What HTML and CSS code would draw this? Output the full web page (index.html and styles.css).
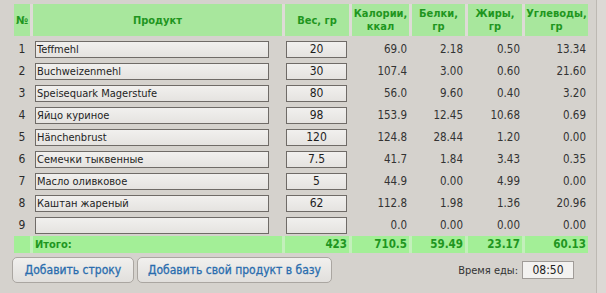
FILE: index.html
```html
<!DOCTYPE html>
<html lang="ru">
<head>
<meta charset="utf-8">
<title>Калькулятор</title>
<link rel="stylesheet" href="styles.css">
</head>
<body>
<div class="page">
  <div class="row head">
    <div class="hc">№</div>
    <div class="hc">Продукт</div>
    <div class="hc">Вес, гр</div>
    <div class="hc">Калории,<br>ккал</div>
    <div class="hc">Белки,<br>гр</div>
    <div class="hc">Жиры, гр</div>
    <div class="hc">Углеводы,<br>гр</div>
  </div>

  <div class="body">
    <div class="row item"><div class="n">1</div><div class="c"><div class="inp name">Teffmehl</div></div><div class="c"><div class="inp w">20</div></div><div class="v">69.0</div><div class="v">2.18</div><div class="v">0.50</div><div class="v">13.34</div></div>
    <div class="row item"><div class="n">2</div><div class="c"><div class="inp name">Buchweizenmehl</div></div><div class="c"><div class="inp w">30</div></div><div class="v">107.4</div><div class="v">3.00</div><div class="v">0.60</div><div class="v">21.60</div></div>
    <div class="row item"><div class="n">3</div><div class="c"><div class="inp name">Speisequark Magerstufe</div></div><div class="c"><div class="inp w">80</div></div><div class="v">56.0</div><div class="v">9.60</div><div class="v">0.40</div><div class="v">3.20</div></div>
    <div class="row item"><div class="n">4</div><div class="c"><div class="inp name">Яйцо куриное</div></div><div class="c"><div class="inp w">98</div></div><div class="v">153.9</div><div class="v">12.45</div><div class="v">10.68</div><div class="v">0.69</div></div>
    <div class="row item"><div class="n">5</div><div class="c"><div class="inp name">Hänchenbrust</div></div><div class="c"><div class="inp w">120</div></div><div class="v">124.8</div><div class="v">28.44</div><div class="v">1.20</div><div class="v">0.00</div></div>
    <div class="row item"><div class="n">6</div><div class="c"><div class="inp name">Семечки тыквенные</div></div><div class="c"><div class="inp w">7.5</div></div><div class="v">41.7</div><div class="v">1.84</div><div class="v">3.43</div><div class="v">0.35</div></div>
    <div class="row item"><div class="n">7</div><div class="c"><div class="inp name">Масло оливковое</div></div><div class="c"><div class="inp w">5</div></div><div class="v">44.9</div><div class="v">0.00</div><div class="v">4.99</div><div class="v">0.00</div></div>
    <div class="row item"><div class="n">8</div><div class="c"><div class="inp name">Каштан жареный</div></div><div class="c"><div class="inp w">62</div></div><div class="v">112.8</div><div class="v">1.98</div><div class="v">1.36</div><div class="v">20.96</div></div>
    <div class="row item"><div class="n">9</div><div class="c"><div class="inp name"></div></div><div class="c"><div class="inp w"></div></div><div class="v">0.0</div><div class="v">0.00</div><div class="v">0.00</div><div class="v">0.00</div></div>
  </div>

  <div class="row total">
    <div class="tc"></div>
    <div class="tc label">Итого:</div>
    <div class="tc num">423</div>
    <div class="tc num">710.5</div>
    <div class="tc num">59.49</div>
    <div class="tc num">23.17</div>
    <div class="tc num">60.13</div>
  </div>

  <div class="footer">
    <button class="btn b1" type="button">Добавить строку</button>
    <button class="btn b2" type="button">Добавить свой продукт в базу</button>
    <div class="time">
      <span class="time-label">Время еды:</span>
      <div class="time-inp">08:50</div>
    </div>
  </div>
</div>
</body>
</html>
```

FILE: styles.css
```css
html, body {
  margin: 0;
  padding: 0;
  background: #dcd9d5;
}
body {
  font-family: "DejaVu Sans Condensed", "Liberation Sans", sans-serif;
  font-size: 11px;
  color: #2b2b2b;
}
.page {
  width: 597px;
  height: 293px;
  box-sizing: border-box;
  padding-top: 4px;
  background: #d5d2cd;
  border-right: 1px solid #bdb9b3;
}
.row {
  display: grid;
  grid-template-columns: 16px 249px 64px 57px 53px 54px 63px;
  column-gap: 3px;
  margin-left: 14px;
  width: 574px;
}
.head {
  height: 32px;
  background: #dedbd6;
}
.hc {
  background: #a8e79d;
  color: #1f961f;
  font-weight: bold;
  font-size: 11px;
  display: flex;
  align-items: center;
  justify-content: center;
  text-align: center;
  line-height: 13px;
}
.body {
  padding-top: 2px;
}
.item {
  height: 22px;
  align-items: center;
}
.n {
  text-align: center;
  font-size: 12px;
}
.c {
  display: flex;
  align-items: center;
}
.inp {
  height: 17px;
  box-sizing: border-box;
  border: 1px solid #6f6b67;
  background: linear-gradient(#f1f0ee, #e5e3e0);
  line-height: 15px;
  color: #1e1e1e;
  white-space: nowrap;
  overflow: hidden;
}
.name {
  margin-left: 2px;
  width: 234px;
  padding-left: 1px;
}
.w {
  margin-left: 1px;
  width: 61px;
  text-align: center;
  font-size: 12px;
}
.v {
  text-align: right;
  padding-right: 2px;
  color: #333;
  font-size: 11.5px;
}
.total {
  height: 17px;
  background: #c3efbb;
}
.tc {
  background: #a3ef97;
  color: #1f961f;
  font-weight: bold;
  line-height: 17px;
}
.tc.label {
  padding-left: 2px;
}
.tc.num {
  text-align: right;
  padding-right: 2px;
  font-size: 11.5px;
}
.footer {
  display: flex;
  align-items: center;
  margin-top: 4px;
  padding-left: 12px;
  height: 26px;
}
.btn {
  height: 26px;
  border: 1px solid #aaa6a1;
  border-radius: 5px;
  background: linear-gradient(#f1f0ee, #e1dfdc);
  color: #2a6dae;
  font-family: inherit;
  font-size: 12px;
  font-weight: normal;
  -webkit-text-stroke: 0.3px #2a6dae;
  padding: 0;
  margin: 0;
}
.b1 { width: 122px; }
.b2 { width: 195px; margin-left: 3px; }
.time {
  margin-left: auto;
  margin-right: 22px;
  display: flex;
  align-items: center;
}
.time-label {
  color: #333;
  margin-right: 4px;
}
.time-inp {
  width: 52px;
  height: 18px;
  box-sizing: border-box;
  border: 1px solid #a09c98;
  background: #f3f2f0;
  text-align: center;
  line-height: 16px;
  color: #222;
  font-size: 12px;
}
```
